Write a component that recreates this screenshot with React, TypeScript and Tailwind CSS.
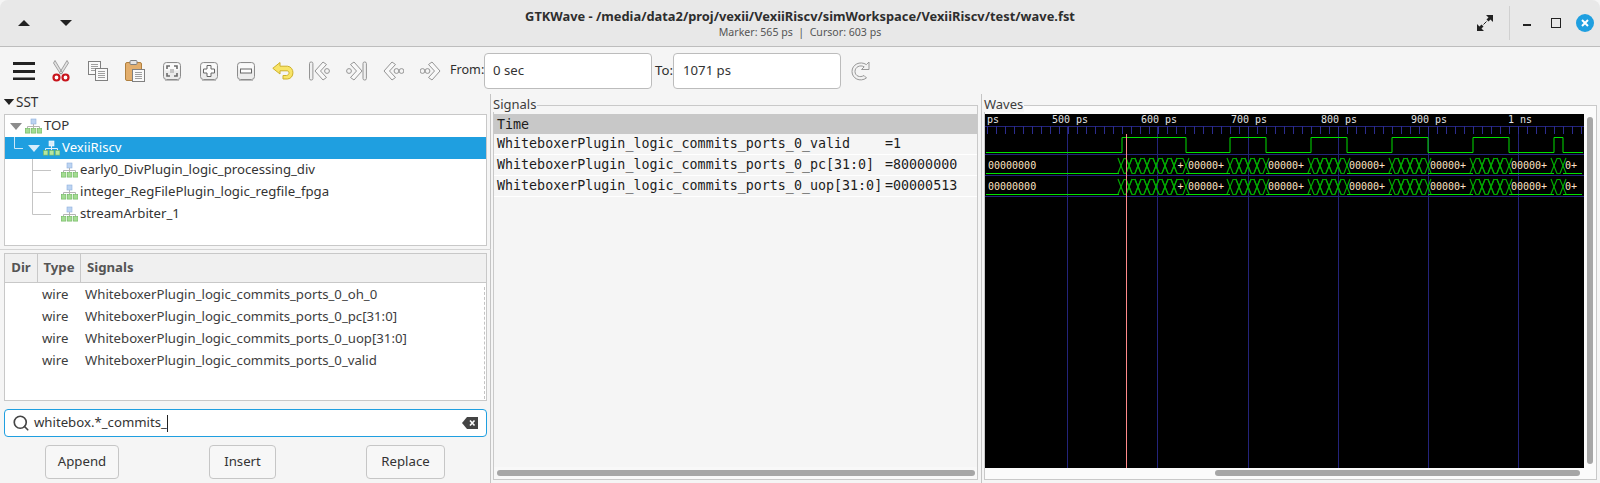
import { ReactNode } from "react";
import { Search } from "lucide-react";

const SANS = "font-['Noto_Sans',sans-serif]";
const MONO = "font-['DejaVu_Sans_Mono',monospace]";

const BUS_TEXT = "#ffe4c4";

// bus value segments: [start, end, label]
const BURSTS: [number, number, string][] = [
  [1121, 1129, ""],
  [1129, 1138, ""],
  [1138, 1147, ""],
  [1147, 1156, ""],
  [1156, 1165, ""],
  [1165, 1174, ""],
  [1174, 1186, "+"],
  [1186, 1230, "00000+"],
  [1230, 1239, ""],
  [1239, 1248, ""],
  [1248, 1257, ""],
  [1257, 1266, ""],
  [1266, 1311, "00000+"],
  [1311, 1320, ""],
  [1320, 1329, ""],
  [1329, 1338, ""],
  [1338, 1347, ""],
  [1347, 1392, "00000+"],
  [1392, 1401, ""],
  [1401, 1410, ""],
  [1410, 1419, ""],
  [1419, 1428, ""],
  [1428, 1473, "00000+"],
  [1473, 1482, ""],
  [1482, 1491, ""],
  [1491, 1500, ""],
  [1500, 1509, ""],
  [1509, 1554, "00000+"],
  [1554, 1563, ""],
  [1563, 1582, "0+"],
];

const VALID_EDGES = [1122, 1186, 1230, 1266, 1311, 1347, 1392, 1428, 1473, 1509, 1554, 1563];
const MAJOR = [1067, 1157, 1248, 1338, 1428, 1518];
const TIME_LABELS: [number, string][] = [
  [987, "ps"],
  [1052, "500 ps"],
  [1141, "600 ps"],
  [1231, "700 ps"],
  [1321, "800 ps"],
  [1411, "900 ps"],
  [1508, "1 ns"],
];

function validPath() {
  let d = "M986 151.5";
  let high = false;
  for (const x of VALID_EDGES) {
    d += ` H${x} V${high ? 151.5 : 136.5}`;
    high = !high;
  }
  return d + " H1583";
}

function BusTrace({ top }: { top: number }) {
  const hi = top;
  const lo = top + 15;
  const mid = (hi + lo) / 2;
  return (
    <g>
      <path d={`M986 ${lo + 0.5} H1119`} stroke="#00e000" strokeWidth="1" fill="none" />
      <text x="988" y={mid + 3} fill={BUS_TEXT} fontSize="10" fontFamily="DejaVu Sans Mono, monospace">
        00000000
      </text>
      {BURSTS.map(([a, b, label]) => {
        const wide = b - a > 14;
        return (
          <g key={a}>
            {wide ? (
              <path d={`M${a} ${lo + 0.5} H${b}`} stroke="#00e000" fill="none" />
            ) : (
              <>
                <path
                  d={`M${a - 3} ${lo} L${a + 3} ${hi + 0.5} H${b - 3} L${b + 3} ${lo}`}
                  stroke="#00a800"
                  strokeWidth="1.2"
                  fill="none"
                />
                <path
                  d={`M${a - 3} ${hi} L${a + 3} ${lo + 0.5} H${b - 3} L${b + 3} ${hi}`}
                  stroke="#00a800"
                  strokeWidth="1.2"
                  fill="none"
                />
              </>
            )}
            {label && (
              <text
                x={a + (label === "+" ? 3.5 : 2)}
                y={mid + 3}
                fill={BUS_TEXT}
                fontSize="10"
                fontFamily="DejaVu Sans Mono, monospace"
              >
                {label}
              </text>
            )}
          </g>
        );
      })}
    </g>
  );
}

function WaveCanvas() {
  const ticks: number[] = [];
  for (let x = 987; x < 1584; x += 9) ticks.push(x);
  return (
    <svg width="599" height="354" viewBox="985 113 599 354" className="block bg-black">
      {MAJOR.map((x) => (
        <path key={x} d={`M${x + 0.5} 125 V467`} stroke="#23237a" fill="none" />
      ))}
      <path d="M985 125.5 H1584" stroke="#23237a" fill="none" />
      {ticks.map((x) => (
        <path key={x} d={`M${x + 0.5} 125 V133`} stroke="#2c2c90" fill="none" />
      ))}
      {[153.5, 174.5, 195.5].map((y) => (
        <path key={y} d={`M985 ${y} H1584`} stroke="#23237a" fill="none" />
      ))}
      {TIME_LABELS.map(([x, t]) => (
        <text key={x} x={x} y="122" fill="#e4e4e4" fontSize="10" fontFamily="DejaVu Sans Mono, monospace">
          {t}
        </text>
      ))}
      <path d={validPath()} stroke="#00e000" fill="none" />
      <BusTrace top={157} />
      <BusTrace top={178} />
      <path d="M1126.5 133 V467" stroke="#ff8a8a" fill="none" />
    </svg>
  );
}

function ModuleIcon({ light }: { light?: boolean }) {
  const blue = light ? "#d7ecfa" : "#bcd4f2";
  const green = light ? "#b6e6a0" : "#a4dc92";
  return (
    <svg width="17" height="16" viewBox="0 0 17 16" className="shrink-0">
      <rect x="6" y="1" width="5" height="5" fill={blue} stroke={light ? "#ffffff" : "#8fb0dc"} strokeWidth="0.6" />
      <path d="M8.5 6 V8.5 M2.5 10.5 V8.5 H14.5 V10.5 M8.5 8.5 V10.5" stroke={light ? "#e4f2fb" : "#b4b4b4"} fill="none" />
      {[0, 6, 12].map((x) => (
        <rect key={x} x={x + 0.3} y="10.5" width="4.6" height="4.6" fill={green} stroke="#6cb45c" strokeWidth="0.6" />
      ))}
    </svg>
  );
}

function Tri({ color, className }: { color: string; className?: string }) {
  return (
    <svg width="12" height="7" viewBox="0 0 12 7" className={className}>
      <path d="M0 0 H12 L6 7 Z" fill={color} />
    </svg>
  );
}

function TreeChild({ label, last }: { label: string; last?: boolean }) {
  return (
    <div className="flex h-[22px] items-center text-[#333]">
      <svg width="56" height="22" viewBox="0 0 56 22" className="shrink-0">
        <path d={`M27.5 0 V${last ? 11.5 : 22} M27.5 11.5 H46`} stroke="#c4c4c4" fill="none" />
      </svg>
      <ModuleIcon />
      <span className="ml-[2px]">{label}</span>
    </div>
  );
}

function SignalRow({ name }: { name: string }) {
  return (
    <div className="flex h-[22px] items-center text-[#3d3d3d]">
      <span className="w-[37px] shrink-0" />
      <span className="w-[43px] shrink-0">wire</span>
      <span>{name}</span>
    </div>
  );
}

function Framed({ title, children, className }: { title: string; children: ReactNode; className: string }) {
  return (
    <div className={`relative border border-[#c9c9c9] ${className}`}>
      <span className="absolute -top-[10px] -left-px bg-[#f5f5f5] pr-[1px] text-[13px] leading-[16px] text-[#3d3d3d]">
        {title}
      </span>
      {children}
    </div>
  );
}

function ScrollThumb({ className }: { className: string }) {
  return <div className={`rounded-[3px] bg-[#a6a6a6] ${className}`} />;
}

function Pushbutton({ children, className }: { children: ReactNode; className: string }) {
  return (
    <button className={`h-[34px] rounded-[4px] border border-[#c6c6c6] bg-[#f7f7f7] pb-[1px] text-[#333] ${className}`}>
      {children}
    </button>
  );
}

function Tile({ children }: { children: ReactNode }) {
  return (
    <svg width="20" height="20" viewBox="0 0 20 20">
      <rect x="1.5" y="1.5" width="17" height="17" rx="3" fill="#ececec" stroke="#8c8c8c" />
      <rect x="2.5" y="2.5" width="15" height="7" rx="2" fill="#fafafa" />
      <path d="M3 19.5 H17" stroke="#bcbcbc" />
      {children}
    </svg>
  );
}

function DocLines({ x, y, w, h }: { x: number; y: number; w: number; h: number }) {
  const lines = [];
  for (let ly = y + 3; ly < y + h - 2; ly += 2) lines.push(ly);
  return (
    <g>
      <rect x={x + 0.5} y={y + 0.5} width={w} height={h} fill="#fafafa" stroke="#808080" />
      {lines.map((ly) => (
        <path key={ly} d={`M${x + 3} ${ly + 0.5} H${x + w - 2}`} stroke="#a0a0a0" />
      ))}
    </g>
  );
}

// thick beveled chevron used by the marker navigation buttons
function Chevron({ dir }: { dir: "l" | "r" }) {
  const d =
    dir === "l"
      ? "M9 1 L1 10 L9 19 L12.5 16.5 L6.5 10 L12.5 3.5 Z"
      : "M4 1 L12 10 L4 19 L0.5 16.5 L6.5 10 L0.5 3.5 Z";
  return <path d={d} fill="#f8f8f8" stroke="#949494" strokeWidth="1" strokeLinejoin="round" />;
}

const Dot = ({ x }: { x: number }) => <circle cx={x} cy="10" r="2.4" fill="#f4f4f4" stroke="#949494" />;
const Bar = ({ x }: { x: number }) => <rect x={x} y="1" width="3.4" height="18" rx="1.5" fill="#f0f0f0" stroke="#949494" />;

const TOOL_ICONS: ReactNode[] = [
  <svg key="menu" width="22" height="18" viewBox="0 0 22 18">
    <path d="M0 1.5 H22 M0 9.5 H22 M0 17 H22" stroke="#222" strokeWidth="3" />
  </svg>,
  <svg key="cut" width="18" height="22" viewBox="0 0 18 22">
    <path d="M3 0.5 L10.5 13 L8.5 14 L1.5 3 Z M15 0.5 L7.5 13 L9.5 14 L16.5 3 Z" fill="#e2e2e2" stroke="#8e8e8e" strokeWidth="0.8" />
    <circle cx="4.5" cy="17.5" r="3" fill="#fff" stroke="#c8141c" strokeWidth="2.2" />
    <circle cx="13.5" cy="17.5" r="3" fill="#fff" stroke="#c8141c" strokeWidth="2.2" />
  </svg>,
  <svg key="copy" width="20" height="20" viewBox="0 0 20 20">
    <DocLines x={0} y={0} w={12} h={13} />
    <DocLines x={7} y={7} w={12} h={12} />
  </svg>,
  <svg key="paste" width="20" height="22" viewBox="0 0 20 22">
    <rect x="0.5" y="2.5" width="16" height="18" rx="1.5" fill="#e3ae6c" stroke="#b0803f" />
    <rect x="5" y="0.5" width="7" height="4" rx="1" fill="#e4e4e4" stroke="#808080" />
    <DocLines x={7} y={9} w={12} h={12} />
  </svg>,
  <Tile key="fit">
    <path d="M5 8 V5 H8 M12 5 H15 V8 M15 12 V15 H12 M8 15 H5 V12" stroke="#6c6c6c" strokeWidth="1.6" fill="none" />
    <rect x="8" y="8" width="4" height="4" fill="#c4c4c4" />
  </Tile>,
  <Tile key="plus">
    <path d="M8 4.5 H12 V8 H15.5 V12 H12 V15.5 H8 V12 H4.5 V8 H8 Z" fill="#fdfdfd" stroke="#666" />
  </Tile>,
  <Tile key="minus">
    <rect x="4.5" y="8" width="11" height="4" fill="#fdfdfd" stroke="#666" />
  </Tile>,
  <svg key="undo" width="22" height="18" viewBox="0 0 22 18">
    <path
      d="M8 0.5 L0.8 6.3 L8 12 V8.8 H15 C17.5 8.8 18 13 14.5 13.5 H11 V17 H15.5 C22.5 16.7 23 5 15.5 4.2 H8 Z"
      fill="#f8e468"
      stroke="#cdb02a"
      strokeLinejoin="round"
    />
  </svg>,
  <svg key="first" width="21" height="20" viewBox="0 0 21 20">
    <Bar x={0.5} />
    <g transform="translate(5 0)">
      <Chevron dir="l" />
    </g>
    <Dot x={18} />
  </svg>,
  <svg key="last" width="21" height="20" viewBox="0 0 21 20">
    <Dot x={3} />
    <g transform="translate(4 0)">
      <Chevron dir="r" />
    </g>
    <Bar x={17} />
  </svg>,
  <svg key="prev" width="21" height="20" viewBox="0 0 21 20">
    <Chevron dir="l" />
    <Dot x={13.5} />
    <Dot x={18.5} />
  </svg>,
  <svg key="next" width="21" height="20" viewBox="0 0 21 20">
    <Dot x={2.5} />
    <Dot x={7.5} />
    <g transform="translate(8 0)">
      <Chevron dir="r" />
    </g>
  </svg>,
];

export default function App() {
  return (
    <div className={`flex h-[483px] w-[1600px] flex-col overflow-hidden bg-[#f5f5f5] text-[13.2px] ${SANS}`}>
      {/* Header bar */}
      <div className="flex h-[47px] shrink-0 items-center rounded-t-[8px] border-b border-[#bdbdbd] bg-[#e8e8e8]">
        <div className="flex w-[128px] shrink-0 items-center">
          <svg width="12" height="6" viewBox="0 0 12 6" className="ml-[18px]">
            <path d="M0 6 H12 L6 0 Z" fill="#222" />
          </svg>
          <svg width="12" height="6" viewBox="0 0 12 6" className="ml-[30px]">
            <path d="M0 0 H12 L6 6 Z" fill="#222" />
          </svg>
        </div>
        <div className="flex flex-1 flex-col items-center">
          <span className="text-[12.85px] leading-[18px] font-bold text-[#2e2e2e]">
            GTKWave - /media/data2/proj/vexii/VexiiRiscv/simWorkspace/VexiiRiscv/test/wave.fst
          </span>
          <span className="text-[10.6px] leading-[14px] text-[#555]">Marker: 565 ps&nbsp; |&nbsp; Cursor: 603 ps</span>
        </div>
        <div className="flex w-[128px] shrink-0 items-center">
          <svg width="16" height="16" viewBox="0 0 16 16" className="ml-[5px]">
            <path d="M0 16 V9 L2.5 11.5 L4.5 9.5 L6.5 11.5 L4.5 13.5 L7 16 Z M16 0 V7 L13.5 4.5 L11.5 6.5 L9.5 4.5 L11.5 2.5 L9 0 Z" fill="#222" />
            <path d="M6.5 9.5 L9.5 6.5" stroke="#222" />
          </svg>
          <div className="ml-[16px] h-[34px] w-px bg-[#d0d0d0]" />
          <div className="ml-[13px] h-[2px] w-[8px] translate-y-[2px] bg-[#222]" />
          <div className="ml-[20px] h-[8px] w-[8px] border-[1.5px] border-[#222] box-content" />
          <div className="ml-[15px] flex h-[18px] w-[18px] items-center justify-center rounded-full bg-[#1f9fe0]">
            <svg width="8" height="8" viewBox="0 0 8 8">
              <path d="M1 1 L7 7 M7 1 L1 7" stroke="#fff" strokeWidth="2" />
            </svg>
          </div>
        </div>
      </div>

      {/* Toolbar */}
      <div className="flex h-[47px] shrink-0 items-center pl-[5px]">
        {TOOL_ICONS.map((icon, i) => (
          <div key={i} className="flex h-[24px] w-[37px] shrink-0 items-center justify-center">
            {icon}
          </div>
        ))}
        <span className="ml-[1px] w-[34px] shrink-0 text-[12.6px] whitespace-nowrap text-[#2e2e2e]">From:</span>
        <div className="flex h-[36px] w-[168px] shrink-0 items-center rounded-[4px] border border-[#bcbcbc] bg-white pl-[8px] text-[#333]">
          0 sec
        </div>
        <span className="w-[21px] shrink-0 pl-[3px] text-[#2e2e2e]">To:</span>
        <div className="flex h-[36px] w-[168px] shrink-0 items-center rounded-[4px] border border-[#bcbcbc] bg-white pl-[9px] text-[#333]">
          1071 ps
        </div>
        <svg width="20" height="20" viewBox="0 0 20 20" className="ml-[10px]">
          <path
            d="M18 1 V8.5 H10.5 L13.2 5.8 C9 3.5 4 6 4 10.5 C4 15 9 17 13 14.5 L15.5 17 C9 21.5 1 17.5 1 10.5 C1 3.5 9 -0.5 15.4 3.6 Z"
            fill="#f2f2f2"
            stroke="#989898"
            strokeLinejoin="round"
          />
        </svg>
      </div>

      {/* Panes */}
      <div className="flex min-h-0 flex-1">
        {/* Left pane */}
        <div className="flex w-[491px] shrink-0 flex-col border-r border-[#c4c4c4] pl-[4px] pr-[3px]">
          <div className="-ml-[1px] flex h-[20px] shrink-0 items-center gap-[1px] pb-[4px] text-[13.5px] text-[#2e2e2e]">
            <Tri color="#222" className="h-[6px] w-[12px]" />
            <span>SST</span>
          </div>
          <div className="h-[132px] shrink-0 border border-[#c8c8c8] bg-white">
            <div className="flex h-[22px] items-center pl-[5px] text-[#333]">
              <Tri color="#8c8c8c" />
              <span className="ml-[3px]">
                <ModuleIcon />
              </span>
              <span className="ml-[2px]">TOP</span>
            </div>
            <div className="flex h-[22px] items-center bg-[#1f9fe0] text-white">
              <svg width="23" height="22" viewBox="0 0 23 22" className="shrink-0">
                <path d="M9.5 0 V11.5 H18" stroke="#cfe8f7" fill="none" />
              </svg>
              <Tri color="#d6edfb" />
              <span className="ml-[3px]">
                <ModuleIcon light />
              </span>
              <span className="ml-[2px]">VexiiRiscv</span>
            </div>
            <TreeChild label="early0_DivPlugin_logic_processing_div" />
            <TreeChild label="integer_RegFilePlugin_logic_regfile_fpga" />
            <TreeChild label="streamArbiter_1" last />
          </div>

          <div className="-mx-[4px] mt-[3px] h-px shrink-0 bg-[#d4d4d4]" />

          <div className="relative mt-[3px] h-[148px] shrink-0 border border-[#c8c8c8] bg-white">
            <div className="flex h-[29px] items-stretch border-b border-[#c8c8c8] bg-[#f0f0f0] font-bold text-[#555]">
              <span className="flex w-[33px] items-center justify-center border-r border-[#c8c8c8]">Dir</span>
              <span className="flex w-[43px] items-center justify-center border-r border-[#c8c8c8]">Type</span>
              <span className="flex items-center pl-[6px]">Signals</span>
            </div>
            <div className="pt-[1px]">
              <SignalRow name="WhiteboxerPlugin_logic_commits_ports_0_oh_0" />
              <SignalRow name="WhiteboxerPlugin_logic_commits_ports_0_pc[31:0]" />
              <SignalRow name="WhiteboxerPlugin_logic_commits_ports_0_uop[31:0]" />
              <SignalRow name="WhiteboxerPlugin_logic_commits_ports_0_valid" />
            </div>
            <div className="absolute top-[33px] right-[1px] bottom-[1px] border-r border-dashed border-[#c4c4c4]" />
          </div>

          <div className="mt-[8px] flex h-[28px] shrink-0 items-center rounded-[4px] border border-[#1f9fe0] bg-white text-[#333]">
            <Search size={18} strokeWidth={2.2} className="ml-[7px] text-[#444]" />
            <span className="ml-[4px]">whitebox.*_commits_</span>
            <span className="h-[17px] w-px bg-[#222]" />
            <svg width="16" height="12" viewBox="0 0 16 12" className="mr-[8px] ml-auto">
              <path d="M5 0 H16 V12 H5 L0 6 Z" fill="#444" />
              <path d="M8 3.5 L12.5 8.5 M12.5 3.5 L8 8.5" stroke="#fff" strokeWidth="1.6" />
            </svg>
          </div>

          <div className="mt-[8px] flex shrink-0">
            <Pushbutton className="ml-[41px] w-[74px]">Append</Pushbutton>
            <Pushbutton className="ml-[90px] w-[67px]">Insert</Pushbutton>
            <Pushbutton className="ml-[90px] w-[79px]">Replace</Pushbutton>
          </div>
        </div>

        {/* Signals pane */}
        <div className="w-[491px] shrink-0 border-r border-[#c4c4c4] pt-[11px] pl-[2px] pr-[3px] pb-[3px]">
          <Framed title="Signals" className="flex h-full flex-col pt-[8px]">
            <div className={`flex-1 text-[13.33px] text-[#1c1c1c] ${MONO}`}>
              <div className="flex h-[20px] items-center bg-[#c8c8c8] pt-[1px] pl-[3px]">Time</div>
              {[
                ["WhiteboxerPlugin_logic_commits_ports_0_valid", "=1"],
                ["WhiteboxerPlugin_logic_commits_ports_0_pc[31:0]", "=80000000"],
                ["WhiteboxerPlugin_logic_commits_ports_0_uop[31:0]", "=00000513"],
              ].map(([name, value]) => (
                <div key={name} className="flex h-[21px] items-center border-b border-white pl-[3px]">
                  <span className="w-[388px] shrink-0 whitespace-pre">{name}</span>
                  <span>{value}</span>
                </div>
              ))}
            </div>
            <div className="flex h-[12px] shrink-0 items-center bg-[#f8f8f8] pl-[3px] pr-[2px]">
              <ScrollThumb className="h-[6px] w-full" />
            </div>
          </Framed>
        </div>

        {/* Waves pane */}
        <div className="min-w-0 flex-1 pt-[11px] pl-[2px] pr-[3px] pb-[3px]">
          <Framed title="Waves" className="flex h-full flex-col bg-[#fbfbfb] pt-[8px]">
            <div className="flex min-h-0 flex-1">
              <WaveCanvas />
              <div className="flex flex-1 justify-center pt-[3px] pb-[3px]">
                <ScrollThumb className="h-full w-[6px]" />
              </div>
            </div>
            <div className="flex h-[12px] shrink-0 items-center justify-end pr-[16px]">
              <ScrollThumb className="h-[6px] w-[365px]" />
            </div>
          </Framed>
        </div>
      </div>
    </div>
  );
}
